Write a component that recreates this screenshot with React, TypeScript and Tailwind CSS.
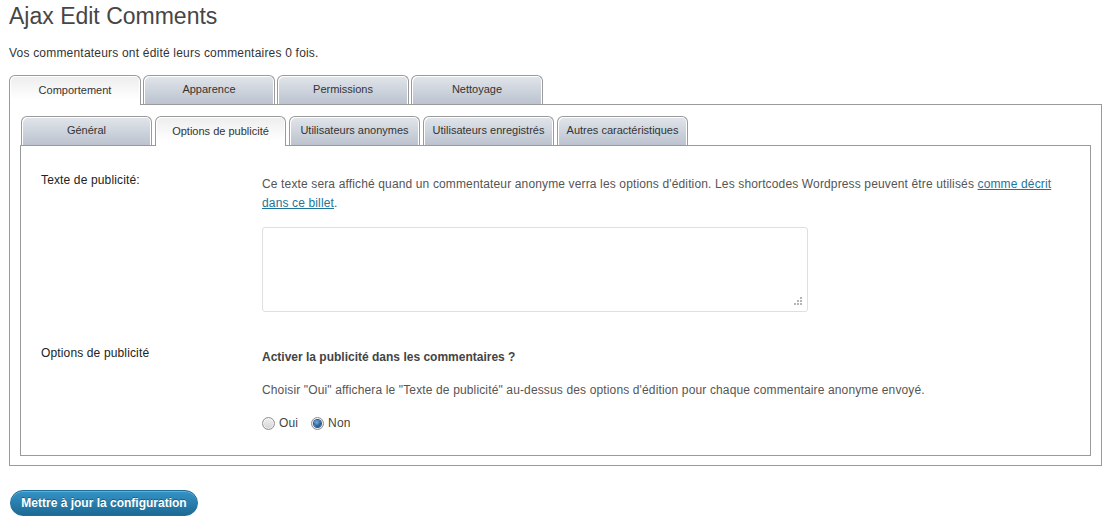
import React from "react";

const outerTabs = ["Comportement", "Apparence", "Permissions", "Nettoyage"];
const innerTabs = [
  "Général",
  "Options de publicité",
  "Utilisateurs anonymes",
  "Utilisateurs enregistrés",
  "Autres caractéristiques",
];

function Tab({ label, active, width }: { label: string; active: boolean; width: string }) {
  return (
    <div
      className={
        (active
          ? "h-[30px] relative z-10 bg-[linear-gradient(to_bottom,#ededed,#ffffff_80%)] "
          : "h-[29px] self-start bg-[linear-gradient(to_bottom,#e1e5eb,#bcc3cf)] ") +
        width +
        " shrink-0 border border-b-0 border-[#9a9a9a] rounded-t-[6px] shadow-[inset_1px_1px_0_#ffffff,inset_-1px_0_0_#ffffff] flex items-center justify-center text-[11px] text-[#333] leading-none pb-[1px]"
      }
    >
      {label}
    </div>
  );
}

function Radio({ checked }: { checked: boolean }) {
  return (
    <span className="inline-flex w-[13px] h-[13px] rounded-full border border-[#8e8f8f] bg-[linear-gradient(to_bottom,#f0f0f0,#d6d6d6)] items-center justify-center shadow-[inset_0_0_0_1px_#ffffff80]">
      {checked && (
        <span className="w-[7px] h-[7px] rounded-full bg-[radial-gradient(circle_at_40%_35%,#6fb4ea,#1b4f86_70%)] shadow-[0_0_0_1px_#24588f]" />
      )}
    </span>
  );
}

export default function App() {
  return (
    <div
      className="w-[1108px] h-[532px] bg-white pl-[9px] pr-[6px] overflow-hidden"
      style={{ fontFamily: '"Liberation Sans", Arial, sans-serif' }}
    >
      <h1 className="text-[23px] leading-[30px] pt-px text-[#464646] font-normal">Ajax Edit Comments</h1>
      <p className="mt-[13px] text-[12px] leading-[18px] tracking-[0.2px] text-[#333]">
        Vos commentateurs ont édité leurs commentaires 0 fois.
      </p>

      <div className="mt-[13px] flex gap-[2px] h-[30px] -mb-px items-end">
        {outerTabs.map((t, i) => (
          <Tab key={t} label={t} active={i === 0} width="w-[132px]" />
        ))}
      </div>

      <div className="border border-[#9a9a9a] bg-white px-[10px] pt-[11px] pb-[9px]">
        <div className="flex gap-[3px] h-[30px] -mb-px items-end pl-px">
          {innerTabs.map((t, i) => (
            <Tab key={t} label={t} active={i === 1} width="w-[131px]" />
          ))}
        </div>

        <div className="border border-[#9a9a9a] bg-white pl-[20px] pr-[20px] pt-[25px] pb-[23px] text-[12px] tracking-[0.14px]">
          <div className="grid grid-cols-[221px_1fr]">
            <div className="leading-[18px] text-[#222]">Texte de publicité:</div>
            <div className="mt-[4px]">
              <p className="leading-[19px] text-[#555]">
                Ce texte sera affiché quand un commentateur anonyme verra les options d'édition. Les shortcodes
                Wordpress peuvent être utilisés{" "}
                <a className="text-[#21759b] underline" href="#">
                  comme décrit dans ce billet
                </a>
                .
              </p>
              <div className="relative mt-[14px] w-[546px] h-[85px] border border-[#dfdfdf] rounded-[3px] bg-white">
                <svg className="absolute right-[4px] bottom-[5px]" width="9" height="9" viewBox="0 0 9 9">
                  <rect x="6" y="0" width="2" height="2" fill="#b5b5b5" />
                  <rect x="3" y="3" width="2" height="2" fill="#b5b5b5" />
                  <rect x="6" y="3" width="2" height="2" fill="#b5b5b5" />
                  <rect x="0" y="6" width="2" height="2" fill="#b5b5b5" />
                  <rect x="3" y="6" width="2" height="2" fill="#b5b5b5" />
                  <rect x="6" y="6" width="2" height="2" fill="#b5b5b5" />
                </svg>
              </div>
            </div>
          </div>

          <div className="grid grid-cols-[221px_1fr] mt-[32px]">
            <div className="leading-[18px] text-[#222]">Options de publicité</div>
            <div className="mt-[4px]">
              <p className="leading-[18px] font-bold text-[#444] tracking-normal">
                Activer la publicité dans les commentaires ?
              </p>
              <p className="mt-[15px] leading-[18px] text-[#555]">
                Choisir "Oui" affichera le "Texte de publicité" au-dessus des options d'édition pour chaque
                commentaire anonyme envoyé.
              </p>
              <div className="mt-[15px] flex items-center h-[18px] text-[#444]">
                <Radio checked={false} />
                <span className="ml-[4px]">Oui</span>
                <span className="ml-[13px]">
                  <Radio checked={true} />
                </span>
                <span className="ml-[4px]">Non</span>
              </div>
            </div>
          </div>
        </div>
      </div>

      <button className="mt-[24px] ml-px w-[188px] h-[26px] rounded-full border border-[#1f6f9a] bg-[linear-gradient(to_bottom,#3593c6,#1c6a94)] text-white text-[12px] font-bold [text-shadow:0_-1px_0_rgba(0,0,0,0.35)] shadow-[inset_0_1px_0_rgba(255,255,255,0.25)] leading-none">
        Mettre à jour la configuration
      </button>
    </div>
  );
}
